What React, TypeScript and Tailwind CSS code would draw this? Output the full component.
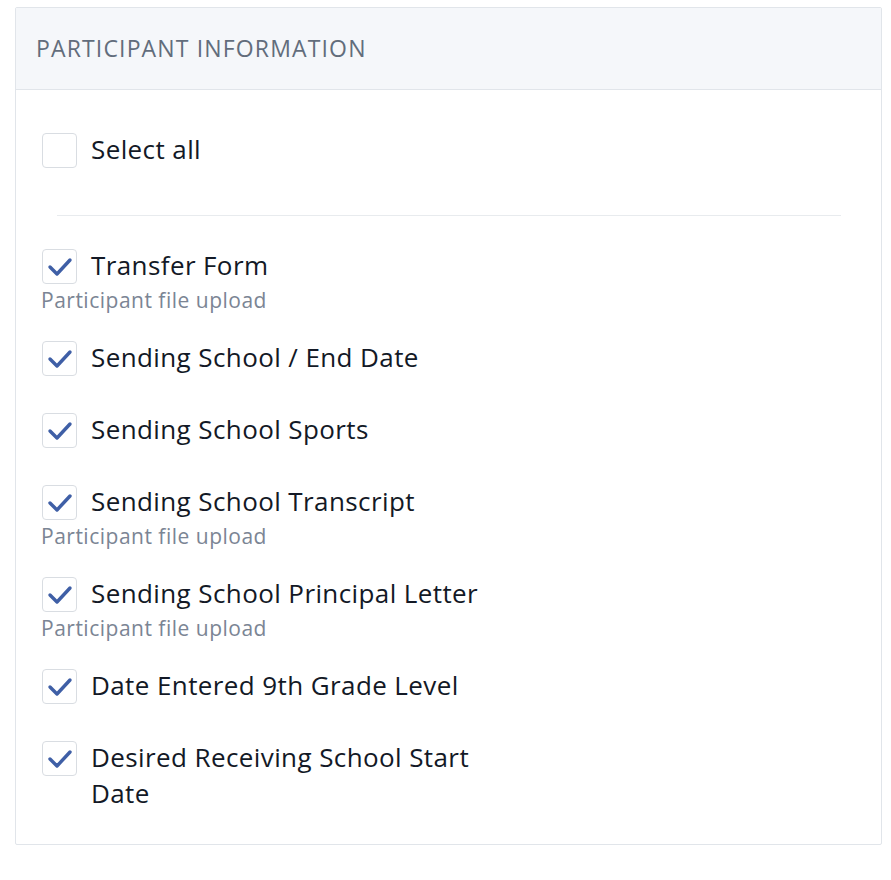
import React from "react";

interface Item {
  label: string;
  sub?: string;
  checked: boolean;
}

const items: Item[] = [
  { label: "Transfer Form", sub: "Participant file upload", checked: true },
  { label: "Sending School / End Date", checked: true },
  { label: "Sending School Sports", checked: true },
  { label: "Sending School Transcript", sub: "Participant file upload", checked: true },
  { label: "Sending School Principal Letter", sub: "Participant file upload", checked: true },
  { label: "Date Entered 9th Grade Level", checked: true },
  { label: "Desired Receiving School Start Date", checked: true },
];

const Box: React.FC<{ checked: boolean }> = ({ checked }) => (
  <div className="w-[35px] h-[35px] shrink-0 rounded-[4px] border border-[#d9dde2] bg-white flex items-center justify-center">
    {checked && (
      <svg width="26" height="22" viewBox="0 0 26 22" fill="none">
        <polyline
          points="3,11 10,18 23,4"
          stroke="#3f5fa6"
          strokeWidth="3.4"
          strokeLinecap="round"
          strokeLinejoin="round"
        />
      </svg>
    )}
  </div>
);

export default function App() {
  return (
    <div
      className="w-[891px] h-[880px] bg-white pt-[7px] pl-[15px]"
      style={{ fontFamily: "'Open Sans', Lato, sans-serif" }}
    >
      <div className="w-[867px] h-[838px] border border-[#e1e5ea] rounded-[2px] bg-white">
        {/* HEADER */}
        <div className="h-[82px] bg-[#f5f7fa] border-b border-[#e1e5ea] flex items-center pl-[20px]">
          <span className="text-[23px] tracking-[1.15px] text-[#626d7c]">PARTICIPANT INFORMATION</span>
        </div>

        {/* BODY */}
        <div className="px-[26px] pt-[43px]">
          <div className="flex items-start gap-[14px]">
            <Box checked={false} />
            <span className="-mt-[2px] text-[26px] leading-[36px] tracking-[0.4px] text-[#131926]">Select all</span>
          </div>

          <div className="h-px bg-[#e8ebee] ml-[15px] mr-[14px] mt-[47px] mb-[33px]" />

          {items.map((it, i) => (
            <div key={i} className={it.sub ? "mb-[30px]" : "mb-[37px]"}>
              <div className="flex items-start gap-[14px]">
                <Box checked={it.checked} />
                <span className="-mt-[2px] text-[26px] leading-[36px] tracking-[0.4px] text-[#131926] max-w-[420px]">
                  {it.label}
                </span>
              </div>
              {it.sub && (
                <div className="text-[21px] leading-[22px] tracking-[0.5px] text-[#7b8594] -ml-px mt-[5px]">{it.sub}</div>
              )}
            </div>
          ))}
        </div>
      </div>
    </div>
  );
}
